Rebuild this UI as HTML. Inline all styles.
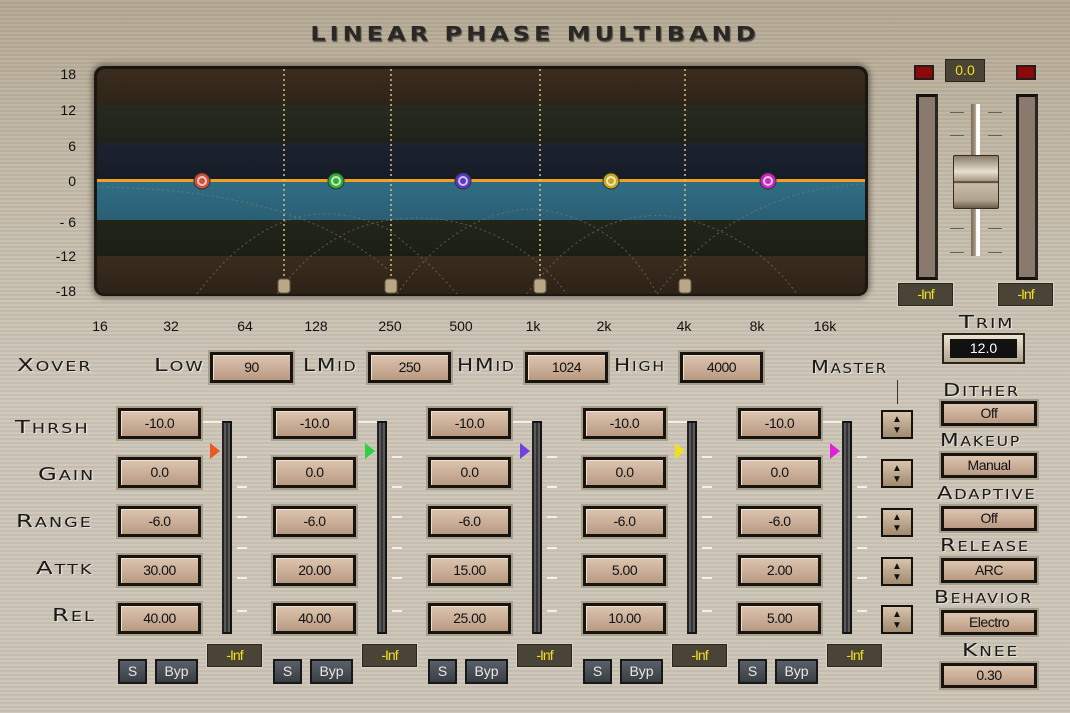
<!DOCTYPE html>
<html><head><meta charset="utf-8">
<style>
*{margin:0;padding:0;box-sizing:border-box}
body{width:1070px;height:713px;overflow:hidden;position:relative;font-family:"Liberation Sans",sans-serif;
background:repeating-linear-gradient(180deg,rgba(255,255,255,0.05) 0 2px,rgba(0,0,0,0.04) 2px 4px),linear-gradient(180deg,#b3a892 0%,#c3baa8 25%,#cdc6b8 55%,#cbc4b6 100%)}
.a{position:absolute}
.lb{position:absolute;font-family:"DejaVu Sans",sans-serif;font-size:18px;color:#1c1a16;letter-spacing:1.5px;font-variant:small-caps;line-height:18px;text-shadow:1px 1px 0 rgba(255,255,255,0.5);white-space:nowrap;transform:scaleX(1.35);transform-origin:left center}
.yl{position:absolute;width:40px;text-align:right;left:36px;font-size:14px;color:#111;line-height:14px}
.fl{position:absolute;top:318px;font-size:14px;color:#111;width:40px;text-align:center}
.vb{position:absolute;width:83px;height:31px;background:linear-gradient(180deg,#dcc5b0,#c8ab94 60%,#b89a83);border:3px solid #17130e;box-shadow:0 0 0 2px #a89e8c, inset 1px 1px 0 #efe0d0;font-size:14px;color:#111;text-align:center;line-height:25px;letter-spacing:-0.5px}
.rb{position:absolute;left:941px;width:96px;height:25px;background:linear-gradient(180deg,#dcc5b0,#c8ab94 60%,#b89a83);border:3px solid #17130e;box-shadow:0 0 0 2px #a89e8c;font-size:14px;color:#111;text-align:center;line-height:19px;letter-spacing:-0.5px}
.inf{position:absolute;width:55px;height:23px;background:#4a4436;border:1px solid #2a261e;box-shadow:0 0 0 1px #d8d2c4;color:#f0e020;font-size:14px;text-align:center;line-height:21px;letter-spacing:-1px}
.mt{position:absolute;width:10px;height:213px;background:#5a5a5a;border:2px solid #141414;border-left-color:#222}
.mt:after{content:"";position:absolute;left:2px;top:0;width:2px;height:100%;background:#333}
.tk{position:absolute;width:10px;height:2px;background:#f4f0e8}
.ln{position:absolute;height:2px;background:#f4f0e8;width:22px}
.ln2{position:absolute;width:2px;height:14px;background:#f4f0e8}
.sb{position:absolute;height:25px;background:linear-gradient(180deg,#5a6068,#3a3e44);border:2px solid #16181a;color:#e8e8e8;font-size:14px;text-align:center;line-height:20px}
.sp{position:absolute;left:881px;width:32px;height:29px;background:linear-gradient(180deg,#d8c4ac,#a08a70);border:2px solid #15120e;font-size:10px;line-height:11px;text-align:center;color:#111;padding-top:2px}
.tri{position:absolute;width:0;height:0;border-top:8px solid transparent;border-bottom:8px solid transparent;border-left:10px solid}
</style></head><body>
<!-- title -->
<div class="a" style="left:295px;top:20px;width:480px;text-align:center;font-family:'DejaVu Sans',sans-serif;font-weight:bold;font-size:24px;letter-spacing:4px;color:#2a2824;text-shadow:1px 2px 1px #5a544a;transform:scaleY(0.8)">LINEAR PHASE MULTIBAND</div>

<!-- graph -->
<div class="a" style="left:94px;top:66px;width:774px;height:230px;border-radius:10px;background:#1a1612;box-shadow:0 0 6px 2px rgba(60,50,40,0.6)"></div>
<div class="a" style="left:97px;top:69px;width:768px;height:225px;border-radius:8px;overflow:hidden">
 <div class="a" style="left:0;top:0;width:100%;height:36px;background:linear-gradient(#3a2d1e,#2e2418)"></div>
 <div class="a" style="left:0;top:36px;width:100%;height:38px;background:linear-gradient(#272b1f,#1e2218)"></div>
 <div class="a" style="left:0;top:74px;width:100%;height:37px;background:linear-gradient(#1c2330,#161c26)"></div>
 <div class="a" style="left:0;top:111px;width:100%;height:40px;background:linear-gradient(#306e86,#2a5f74)"></div>
 <div class="a" style="left:0;top:151px;width:100%;height:36px;background:linear-gradient(#22261a,#1a1e14)"></div>
 <div class="a" style="left:0;top:187px;width:100%;height:38px;background:linear-gradient(#3a2d1e,#2c2216)"></div>
 <div class="a" style="left:0;top:110px;width:100%;height:3px;background:#f0a020"></div>
 <svg class="a" style="left:0;top:0" width="768" height="225">
  <g fill="none" stroke="#8a8070" stroke-width="1" stroke-dasharray="2 3" opacity="0.6">
   <path d="M100 225 Q 187 110 290 160 Q 330 190 360 225"/>
   <path d="M180 225 Q 240 140 340 150 Q 420 160 470 225"/>
   <path d="M300 225 Q 360 140 440 140 Q 520 150 560 225"/>
   <path d="M430 225 Q 500 130 590 150 Q 660 170 700 225"/>
   <path d="M560 225 Q 640 120 768 115"/>
   <path d="M0 118 Q 200 120 290 200"/>
  </g>
  <g stroke="#d8c080" stroke-width="1.5" stroke-dasharray="2 3">
   <line x1="187" y1="0" x2="187" y2="212"/><line x1="294" y1="0" x2="294" y2="212"/>
   <line x1="443" y1="0" x2="443" y2="212"/><line x1="588" y1="0" x2="588" y2="212"/>
  </g>
  <g fill="#b8a888" stroke="#6a5a40"><rect x="181" y="210" width="12" height="14" rx="3"/><rect x="288" y="210" width="12" height="14" rx="3"/><rect x="437" y="210" width="12" height="14" rx="3"/><rect x="582" y="210" width="12" height="14" rx="3"/></g>
  <g stroke="#333" stroke-width="1">
   <circle cx="105" cy="112" r="8" fill="#d05038"/><circle cx="239" cy="112" r="8" fill="#30b030"/><circle cx="366" cy="112" r="8" fill="#5a38c8"/><circle cx="514" cy="112" r="8" fill="#c8a820"/><circle cx="671" cy="112" r="8" fill="#c828c0"/>
  </g>
  <g fill="none" stroke="rgba(255,255,255,0.7)" stroke-width="2"><circle cx="105" cy="112" r="4"/><circle cx="239" cy="112" r="4"/><circle cx="366" cy="112" r="4"/><circle cx="514" cy="112" r="4"/><circle cx="671" cy="112" r="4"/></g>
 </svg>
</div>
<div class="yl" style="top:67px">18</div><div class="yl" style="top:103px">12</div><div class="yl" style="top:139px">6</div><div class="yl" style="top:174px">0</div><div class="yl" style="top:215px">- 6</div><div class="yl" style="top:249px">-12</div><div class="yl" style="top:284px">-18</div>
<div class="fl" style="left:80px">16</div><div class="fl" style="left:151px">32</div><div class="fl" style="left:225px">64</div><div class="fl" style="left:296px">128</div><div class="fl" style="left:370px">250</div><div class="fl" style="left:441px">500</div><div class="fl" style="left:513px">1k</div><div class="fl" style="left:584px">2k</div><div class="fl" style="left:664px">4k</div><div class="fl" style="left:737px">8k</div><div class="fl" style="left:805px">16k</div>

<!-- master section -->
<div class="a" style="left:914px;top:65px;width:20px;height:15px;background:#8a0a0a;border:2px solid #2a1a1a"></div>
<div class="a" style="left:1016px;top:65px;width:20px;height:15px;background:#8a0a0a;border:2px solid #2a1a1a"></div>
<div class="a" style="left:945px;top:59px;width:40px;height:23px;background:#4a4436;border:1px solid #2a261e;color:#f0e020;font-size:14px;text-align:center;line-height:21px">0.0</div>
<div class="a" style="left:916px;top:94px;width:22px;height:186px;background:#8a7a6e;border:3px solid #141210;border-right-color:#2a2620"></div>
<div class="a" style="left:1016px;top:94px;width:22px;height:186px;background:#8a7a6e;border:3px solid #141210;border-right-color:#2a2620"></div>
<div class="a" style="left:971px;top:104px;width:9px;height:152px;background:linear-gradient(90deg,#7a6a58,#a89884 50%,#fff 60%,#fff)"></div>
<div class="tk" style="left:950px;top:112px;width:14px;height:1px;background:#6a6052"></div><div class="tk" style="left:988px;top:112px;width:14px;height:1px;background:#6a6052"></div>
<div class="tk" style="left:950px;top:135px;width:14px;height:1px;background:#6a6052"></div><div class="tk" style="left:988px;top:135px;width:14px;height:1px;background:#6a6052"></div>
<div class="tk" style="left:950px;top:228px;width:14px;height:1px;background:#6a6052"></div><div class="tk" style="left:988px;top:228px;width:14px;height:1px;background:#6a6052"></div>
<div class="tk" style="left:950px;top:252px;width:14px;height:1px;background:#6a6052"></div><div class="tk" style="left:988px;top:252px;width:14px;height:1px;background:#6a6052"></div>
<div class="a" style="left:953px;top:155px;width:46px;height:54px;background:linear-gradient(180deg,#8a7c68,#e8e0d0 30%,#a89880 48%,#2a2018 50%,#c8bca8 53%,#b0a490 85%,#6a5c48);border:1px solid #3a3022;border-radius:2px"></div>
<div class="inf" style="left:898px;top:283px">-Inf</div>
<div class="inf" style="left:998px;top:283px">-Inf</div>
<div class="lb" style="left:959px;top:314px">Trim</div>
<div class="a" style="left:942px;top:333px;width:83px;height:31px;background:linear-gradient(#ece4d4,#b0a48c);border:2px solid #2a241a;padding:4px 6px"><div style="background:#111;color:#fff;font-size:14px;text-align:center;line-height:19px;height:19px">12.0</div></div>

<!-- xover -->
<div class="lb" style="left:17px;top:357px">Xover</div>
<div class="lb" style="left:154px;top:357px">Low</div>
<div class="vb" style="left:210px;top:352px">90</div>
<div class="lb" style="left:303px;top:357px;transform:scaleX(1.2)">LMid</div>
<div class="vb" style="left:368px;top:352px">250</div>
<div class="lb" style="left:457px;top:357px;transform:scaleX(1.2)">HMid</div>
<div class="vb" style="left:525px;top:352px">1024</div>
<div class="lb" style="left:614px;top:357px;transform:scaleX(1.2)">High</div>
<div class="vb" style="left:680px;top:352px">4000</div>
<div class="lb" style="left:811px;top:359px;transform:scaleX(1.15)">Master</div>
<div class="ln2" style="left:897px;top:380px;height:24px;width:1px;background:#333"></div>

<!-- row labels -->
<div class="lb" style="left:15px;top:419px">Thrsh</div>
<div class="lb" style="left:38px;top:466px">Gain</div>
<div class="lb" style="left:16px;top:513px">Range</div>
<div class="lb" style="left:36px;top:560px">Attk</div>
<div class="lb" style="left:52px;top:607px">Rel</div>

<!-- band 1 -->
<div class="vb" style="left:118px;top:408px">-10.0</div><div class="vb" style="left:118px;top:457px">0.0</div><div class="vb" style="left:118px;top:506px">-6.0</div><div class="vb" style="left:118px;top:555px">30.00</div><div class="vb" style="left:118px;top:603px">40.00</div>
<!-- band 2 -->
<div class="vb" style="left:273px;top:408px">-10.0</div><div class="vb" style="left:273px;top:457px">0.0</div><div class="vb" style="left:273px;top:506px">-6.0</div><div class="vb" style="left:273px;top:555px">20.00</div><div class="vb" style="left:273px;top:603px">40.00</div>
<!-- band 3 -->
<div class="vb" style="left:428px;top:408px">-10.0</div><div class="vb" style="left:428px;top:457px">0.0</div><div class="vb" style="left:428px;top:506px">-6.0</div><div class="vb" style="left:428px;top:555px">15.00</div><div class="vb" style="left:428px;top:603px">25.00</div>
<!-- band 4 -->
<div class="vb" style="left:583px;top:408px">-10.0</div><div class="vb" style="left:583px;top:457px">0.0</div><div class="vb" style="left:583px;top:506px">-6.0</div><div class="vb" style="left:583px;top:555px">5.00</div><div class="vb" style="left:583px;top:603px">10.00</div>
<!-- band 5 -->
<div class="vb" style="left:738px;top:408px">-10.0</div><div class="vb" style="left:738px;top:457px">0.0</div><div class="vb" style="left:738px;top:506px">-6.0</div><div class="vb" style="left:738px;top:555px">2.00</div><div class="vb" style="left:738px;top:603px">5.00</div>

<!-- meters per band -->
<div class="ln" style="left:203px;top:421px"></div><div class="mt" style="left:222px;top:421px"></div><div class="tri" style="left:210px;top:443px;border-left-color:#e85a20"></div>
<div class="ln" style="left:358px;top:421px"></div><div class="mt" style="left:377px;top:421px"></div><div class="tri" style="left:365px;top:443px;border-left-color:#30d040"></div>
<div class="ln" style="left:513px;top:421px"></div><div class="mt" style="left:532px;top:421px"></div><div class="tri" style="left:520px;top:443px;border-left-color:#7040e0"></div>
<div class="ln" style="left:668px;top:421px"></div><div class="mt" style="left:687px;top:421px"></div><div class="tri" style="left:675px;top:443px;border-left-color:#f0e020"></div>
<div class="ln" style="left:823px;top:421px"></div><div class="mt" style="left:842px;top:421px"></div><div class="tri" style="left:830px;top:443px;border-left-color:#e020d8"></div>

<!-- ticks -->
<div class="tk" style="left:237px;top:456px"></div><div class="tk" style="left:237px;top:486px"></div><div class="tk" style="left:237px;top:516px"></div><div class="tk" style="left:237px;top:547px"></div><div class="tk" style="left:237px;top:577px"></div><div class="tk" style="left:237px;top:610px"></div>
<div class="tk" style="left:392px;top:456px"></div><div class="tk" style="left:392px;top:486px"></div><div class="tk" style="left:392px;top:516px"></div><div class="tk" style="left:392px;top:547px"></div><div class="tk" style="left:392px;top:577px"></div><div class="tk" style="left:392px;top:610px"></div>
<div class="tk" style="left:547px;top:456px"></div><div class="tk" style="left:547px;top:486px"></div><div class="tk" style="left:547px;top:516px"></div><div class="tk" style="left:547px;top:547px"></div><div class="tk" style="left:547px;top:577px"></div><div class="tk" style="left:547px;top:610px"></div>
<div class="tk" style="left:702px;top:456px"></div><div class="tk" style="left:702px;top:486px"></div><div class="tk" style="left:702px;top:516px"></div><div class="tk" style="left:702px;top:547px"></div><div class="tk" style="left:702px;top:577px"></div><div class="tk" style="left:702px;top:610px"></div>
<div class="tk" style="left:857px;top:456px"></div><div class="tk" style="left:857px;top:486px"></div><div class="tk" style="left:857px;top:516px"></div><div class="tk" style="left:857px;top:547px"></div><div class="tk" style="left:857px;top:577px"></div><div class="tk" style="left:857px;top:610px"></div>

<!-- inf + S/Byp -->
<div class="inf" style="left:207px;top:644px">-Inf</div><div class="sb" style="left:118px;top:659px;width:29px">S</div><div class="sb" style="left:155px;top:659px;width:43px">Byp</div>
<div class="inf" style="left:362px;top:644px">-Inf</div><div class="sb" style="left:273px;top:659px;width:29px">S</div><div class="sb" style="left:310px;top:659px;width:43px">Byp</div>
<div class="inf" style="left:517px;top:644px">-Inf</div><div class="sb" style="left:428px;top:659px;width:29px">S</div><div class="sb" style="left:465px;top:659px;width:43px">Byp</div>
<div class="inf" style="left:672px;top:644px">-Inf</div><div class="sb" style="left:583px;top:659px;width:29px">S</div><div class="sb" style="left:620px;top:659px;width:43px">Byp</div>
<div class="inf" style="left:827px;top:644px">-Inf</div><div class="sb" style="left:738px;top:659px;width:29px">S</div><div class="sb" style="left:775px;top:659px;width:43px">Byp</div>

<!-- spinners -->
<div class="sp" style="top:410px">▲<br>▼</div>
<div class="sp" style="top:459px">▲<br>▼</div>
<div class="sp" style="top:508px">▲<br>▼</div>
<div class="sp" style="top:557px">▲<br>▼</div>
<div class="sp" style="top:605px">▲<br>▼</div>

<!-- right column -->
<div class="lb" style="left:943px;top:382px;transform:scaleX(1.25)">Dither</div><div class="rb" style="top:401px">Off</div>
<div class="lb" style="left:940px;top:432px;transform:scaleX(1.2)">Makeup</div><div class="rb" style="top:453px">Manual</div>
<div class="lb" style="left:937px;top:485px;transform:scaleX(1.25)">Adaptive</div><div class="rb" style="top:506px">Off</div>
<div class="lb" style="left:940px;top:537px;transform:scaleX(1.25)">Release</div><div class="rb" style="top:558px">ARC</div>
<div class="lb" style="left:934px;top:589px;transform:scaleX(1.2)">Behavior</div><div class="rb" style="top:610px">Electro</div>
<div class="lb" style="left:962px;top:642px;transform:scaleX(1.3)">Knee</div><div class="rb" style="top:663px">0.30</div>
</body></html>
